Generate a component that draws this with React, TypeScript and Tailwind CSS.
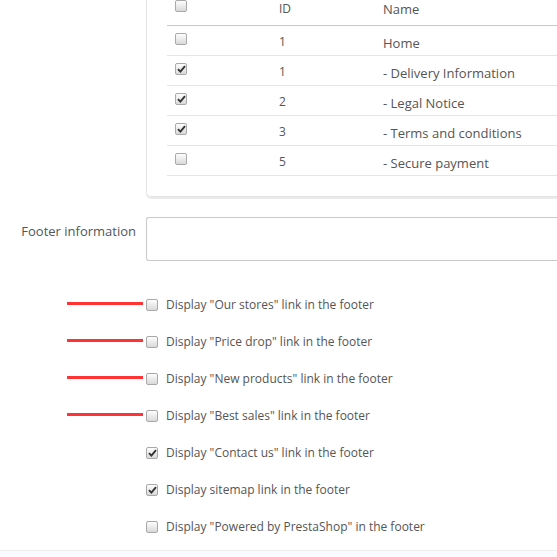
import React from "react";

type Page = { id: number; name: string; checked: boolean };

const pages: Page[] = [
  { id: 1, name: "Home", checked: false },
  { id: 1, name: "- Delivery Information", checked: true },
  { id: 2, name: "- Legal Notice", checked: true },
  { id: 3, name: "- Terms and conditions", checked: true },
  { id: 5, name: "- Secure payment", checked: false },
];

const options = [
  { label: 'Display "Our stores" link in the footer', checked: false, marked: true },
  { label: 'Display "Price drop" link in the footer', checked: false, marked: true },
  { label: 'Display "New products" link in the footer', checked: false, marked: true },
  { label: 'Display "Best sales" link in the footer', checked: false, marked: true },
  { label: 'Display "Contact us" link in the footer', checked: true, marked: false },
  { label: "Display sitemap link in the footer", checked: true, marked: false },
  { label: 'Display "Powered by PrestaShop" in the footer', checked: false, marked: false },
];

function Checkbox({ checked }: { checked: boolean }) {
  return (
    <span className="flex h-[12px] w-[12px] shrink-0 items-center justify-center rounded-[2px] border border-[#a9a9a9] bg-gradient-to-b from-[#fdfdfd] to-[#d9d9d9]">
      {checked && (
        <svg width="9" height="8" viewBox="0 0 9 8">
          <path d="M1 4.2 L3.4 6.6 L8 1.2" fill="none" stroke="#333" strokeWidth="1.9" />
        </svg>
      )}
    </span>
  );
}

export default function App() {
  return (
    <div className="relative h-[557px] w-[557px] overflow-hidden bg-white font-['Open_Sans',sans-serif] text-[#555]">
      {/* CMS pages panel */}
      <div className="-mt-[7px] ml-[146px] w-[440px] rounded-b-[5px] border-x border-b border-[#e3e3e3] px-[20px] pb-[20px] shadow-[0_2px_0_rgba(0,0,0,0.08)]">
        <div className="flex h-[33px] border-b border-[#a7d3ea] text-[12px]">
          <div className="w-[104px] pl-[8px] pt-[7px]">
            <Checkbox checked={false} />
          </div>
          <div className="w-[104px] pl-[8px] pt-[7px]">ID</div>
          <div className="flex-1 pl-[8px] pt-[7px] text-[13px]">Name</div>
        </div>
        {pages.map((p, i) => (
          <div key={i} className="flex h-[30px] border-b border-[#e5e5e5]">
            <div className="w-[104px] pl-[8px] pt-[7px]">
              <Checkbox checked={p.checked} />
            </div>
            <div className="w-[104px] pl-[8px] pt-[7px] text-[12px] leading-[17px]">{p.id}</div>
            <div className="flex-1 pl-[8px] pt-[8px] text-[13px] leading-[18px]">{p.name}</div>
          </div>
        ))}
      </div>

      {/* Footer information */}
      <div className="mt-[20px] flex">
        <label className="w-[146px] pr-[10px] pt-[5px] text-right text-[13px] leading-[18px]">
          Footer information
        </label>
        <div className="h-[44px] flex-1 rounded-l-[3px] border border-r-0 border-[#c9c9c9] bg-white" />
      </div>

      {/* Footer link options */}
      <div className="mt-[25px] flex flex-col">
        {options.map((o, i) => (
          <div key={i} className="flex h-[37px] items-center">
            <div className="flex w-[146px] justify-end pr-[3px]">
              {o.marked && <span className="mt-[-2px] h-[3px] w-[76px] bg-[#ff3333]" />}
            </div>
            <Checkbox checked={o.checked} />
            <span className="ml-[8px] text-[12px] leading-[17px]">{o.label}</span>
          </div>
        ))}
      </div>

      <div className="mt-[5px] h-[20px] border-t border-[#ececec] bg-[#fafbfc]" />
    </div>
  );
}
